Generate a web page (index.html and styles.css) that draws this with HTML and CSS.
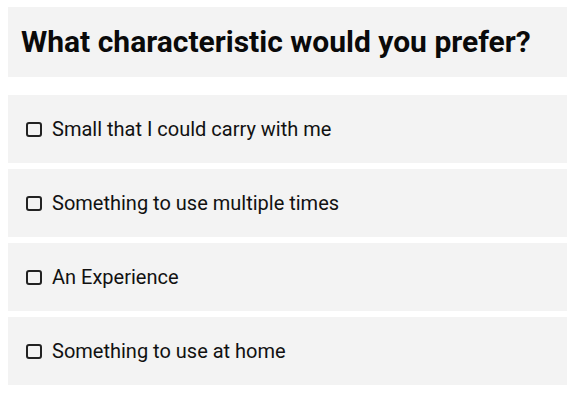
FILE: index.html
```html
<!DOCTYPE html>
<html>
<head>
<meta charset="utf-8">
<link rel="stylesheet" href="styles.css">
</head>
<body>
<div class="quiz">
  <div class="question"><h1>What characteristic would you prefer?</h1></div>
  <div class="options">
    <label class="option"><span class="box"></span><span class="text">Small that I could carry with me</span></label>
    <label class="option"><span class="box"></span><span class="text">Something to use multiple times</span></label>
    <label class="option"><span class="box"></span><span class="text">An Experience</span></label>
    <label class="option"><span class="box"></span><span class="text">Something to use at home</span></label>
  </div>
</div>
</body>
</html>
```
FILE: styles.css
```css
html, body { margin: 0; padding: 0; background: #fff; }
body { font-family: Roboto, "Liberation Sans", sans-serif; color: #111; overflow: hidden; }
.quiz { padding: 7px 0 0 8px; }
.question {
  background: #f3f3f3;
  height: 70px;
  display: flex;
  align-items: center;
  padding-left: 13px;
}
.question h1 { margin: 0; font-size: 30px; font-weight: 700; color: #0a0a0a; line-height: 1; }
.options { margin-top: 18px; display: flex; flex-direction: column; gap: 6px; }
.option {
  background: #f3f3f3;
  height: 68px;
  display: flex;
  align-items: center;
  padding-left: 18px;
}
.box {
  box-sizing: border-box;
  width: 16px; height: 15px;
  border: 2px solid #222;
  border-radius: 3px;
  margin-right: 10px;
  flex: none;
}
.text { font-size: 20px; color: #111; }
```
